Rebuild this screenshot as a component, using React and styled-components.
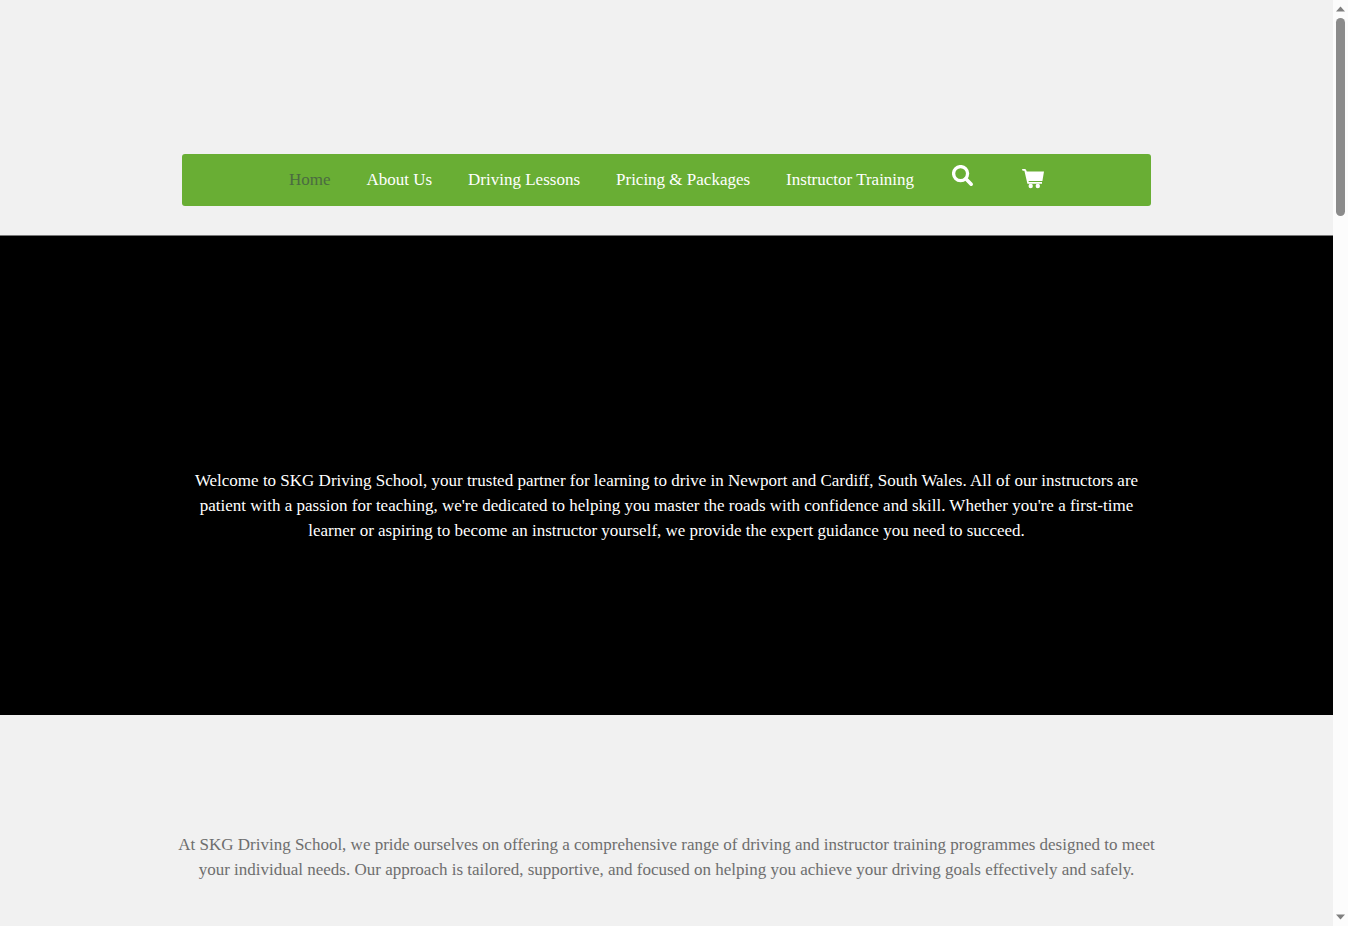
import styled, { createGlobalStyle } from "styled-components";

const GlobalStyles = createGlobalStyle`
  * {
    box-sizing: border-box;
    margin: 0;
    padding: 0;
  }

  body {
    background-color: #f1f1f1;
    color: #6e6e6e;
    font-family: "Liberation Serif", "Times New Roman", serif;
    font-size: 17px;
    line-height: 25px;
  }
`;

const Window = styled.div`
  display: grid;
  grid-template-columns: 1fr 15px;
  height: 100vh;
  overflow: hidden;
`;

const Page = styled.div`
  min-width: 0;
  overflow: hidden;
`;

const Container = styled.div`
  width: 100%;
  max-width: 969px;
  margin: 0 auto;
`;

const Header = styled.header`
  padding: 154px 0 29px;
  border-bottom: 1px solid #777;
`;

const Menu = styled.ul`
  display: flex;
  justify-content: center;
  min-height: 52px;
  list-style: none;
  background-color: #69ae34;
  border-radius: 3px;
`;

const MenuLink = styled.a`
  display: block;
  padding: 13px 18px;
  color: ${(props) => (props.$active ? "#4b6b41" : "#fff")};
  text-decoration: none;
  white-space: nowrap;
`;

const SearchButton = styled.button`
  display: block;
  margin-right: 10px;
  padding: 11px 19px 11px 20px;
  color: #fff;
  background: none;
  border: none;
  cursor: pointer;
`;

const CartLink = styled.a`
  display: block;
  padding: 14px 18px 14px 19px;
  color: #fff;
`;

const Icon = styled.svg`
  display: block;
  width: 22px;
  height: 22px;
`;

const Hero = styled.section`
  display: flex;
  align-items: center;
  min-height: 479px;
  padding-top: 60px;
  color: #fff;
  background-color: #000;
`;

const Intro = styled.section`
  padding: 117px 0 40px;
`;

const Text = styled.p`
  max-width: 980px;
  margin: 0 auto;
  text-align: center;
`;

const Scrollbar = styled.div`
  display: flex;
  flex-direction: column;
  align-items: center;
  justify-content: space-between;
  padding: 6px 0;
  background-color: #fcfcfc;
`;

const Track = styled.div`
  flex: 1;
  padding: 6px 0;
`;

const Thumb = styled.div`
  width: 9px;
  height: 198px;
  background-color: #8b8b8b;
  border-radius: 5px;
`;

const Arrow = styled.svg`
  display: block;
  width: 9px;
  height: 6px;
  fill: #7f7f7f;
`;

const links = [
  "Home",
  "About Us",
  "Driving Lessons",
  "Pricing & Packages",
  "Instructor Training",
];

function SearchIcon() {
  return (
    <Icon viewBox="0 0 22 22" aria-hidden="true">
      <circle
        cx="8.6"
        cy="8.6"
        r="7"
        fill="none"
        stroke="currentColor"
        strokeWidth="3.3"
      />
      <path
        d="M13.8 13.8 19.2 19.2"
        fill="none"
        stroke="currentColor"
        strokeWidth="3.6"
        strokeLinecap="round"
      />
    </Icon>
  );
}

function CartIcon() {
  return (
    <Icon viewBox="0 0 22 22" fill="currentColor" aria-hidden="true">
      <path d="M0 .9h2.8c.6 0 1 .3 1.2.8l.8 1.7H22l-1.6 9.6H6.5l.3 1H20v1.8H5.4L2.4 2.8H.6z" />
      <circle cx="8.7" cy="18" r="2.2" />
      <circle cx="15.8" cy="18" r="2.2" />
    </Icon>
  );
}

function App() {
  return (
    <>
      <GlobalStyles />
      <Window>
        <Page>
          <Header>
            <Container as="nav">
              <Menu>
                {links.map((link, i) => (
                  <li key={link}>
                    <MenuLink href="#" $active={i === 0}>
                      {link}
                    </MenuLink>
                  </li>
                ))}
                <li>
                  <SearchButton aria-label="Search">
                    <SearchIcon />
                  </SearchButton>
                </li>
                <li>
                  <CartLink href="#" aria-label="Cart">
                    <CartIcon />
                  </CartLink>
                </li>
              </Menu>
            </Container>
          </Header>

          <main>
            <Hero>
              <Text>
                Welcome to SKG Driving School, your trusted partner for learning
                to drive in Newport and Cardiff, South Wales. All of our
                instructors are patient with a passion for teaching, we're
                dedicated to helping you master the roads with confidence and
                skill. Whether you're a first-time learner or aspiring to become
                an instructor yourself, we provide the expert guidance you need
                to succeed.
              </Text>
            </Hero>

            <Intro>
              <Text>
                At SKG Driving School, we pride ourselves on offering a
                comprehensive range of driving and instructor training
                programmes designed to meet your individual needs. Our approach
                is tailored, supportive, and focused on helping you achieve your
                driving goals effectively and safely.
              </Text>
            </Intro>
          </main>
        </Page>

        <Scrollbar aria-hidden="true">
          <Arrow viewBox="0 0 9 6">
            <path d="M0 5.5 4.5 0.5 9 5.5z" />
          </Arrow>
          <Track>
            <Thumb />
          </Track>
          <Arrow viewBox="0 0 9 6">
            <path d="M0 0.5 4.5 5.5 9 0.5z" />
          </Arrow>
        </Scrollbar>
      </Window>
    </>
  );
}

export default App;
